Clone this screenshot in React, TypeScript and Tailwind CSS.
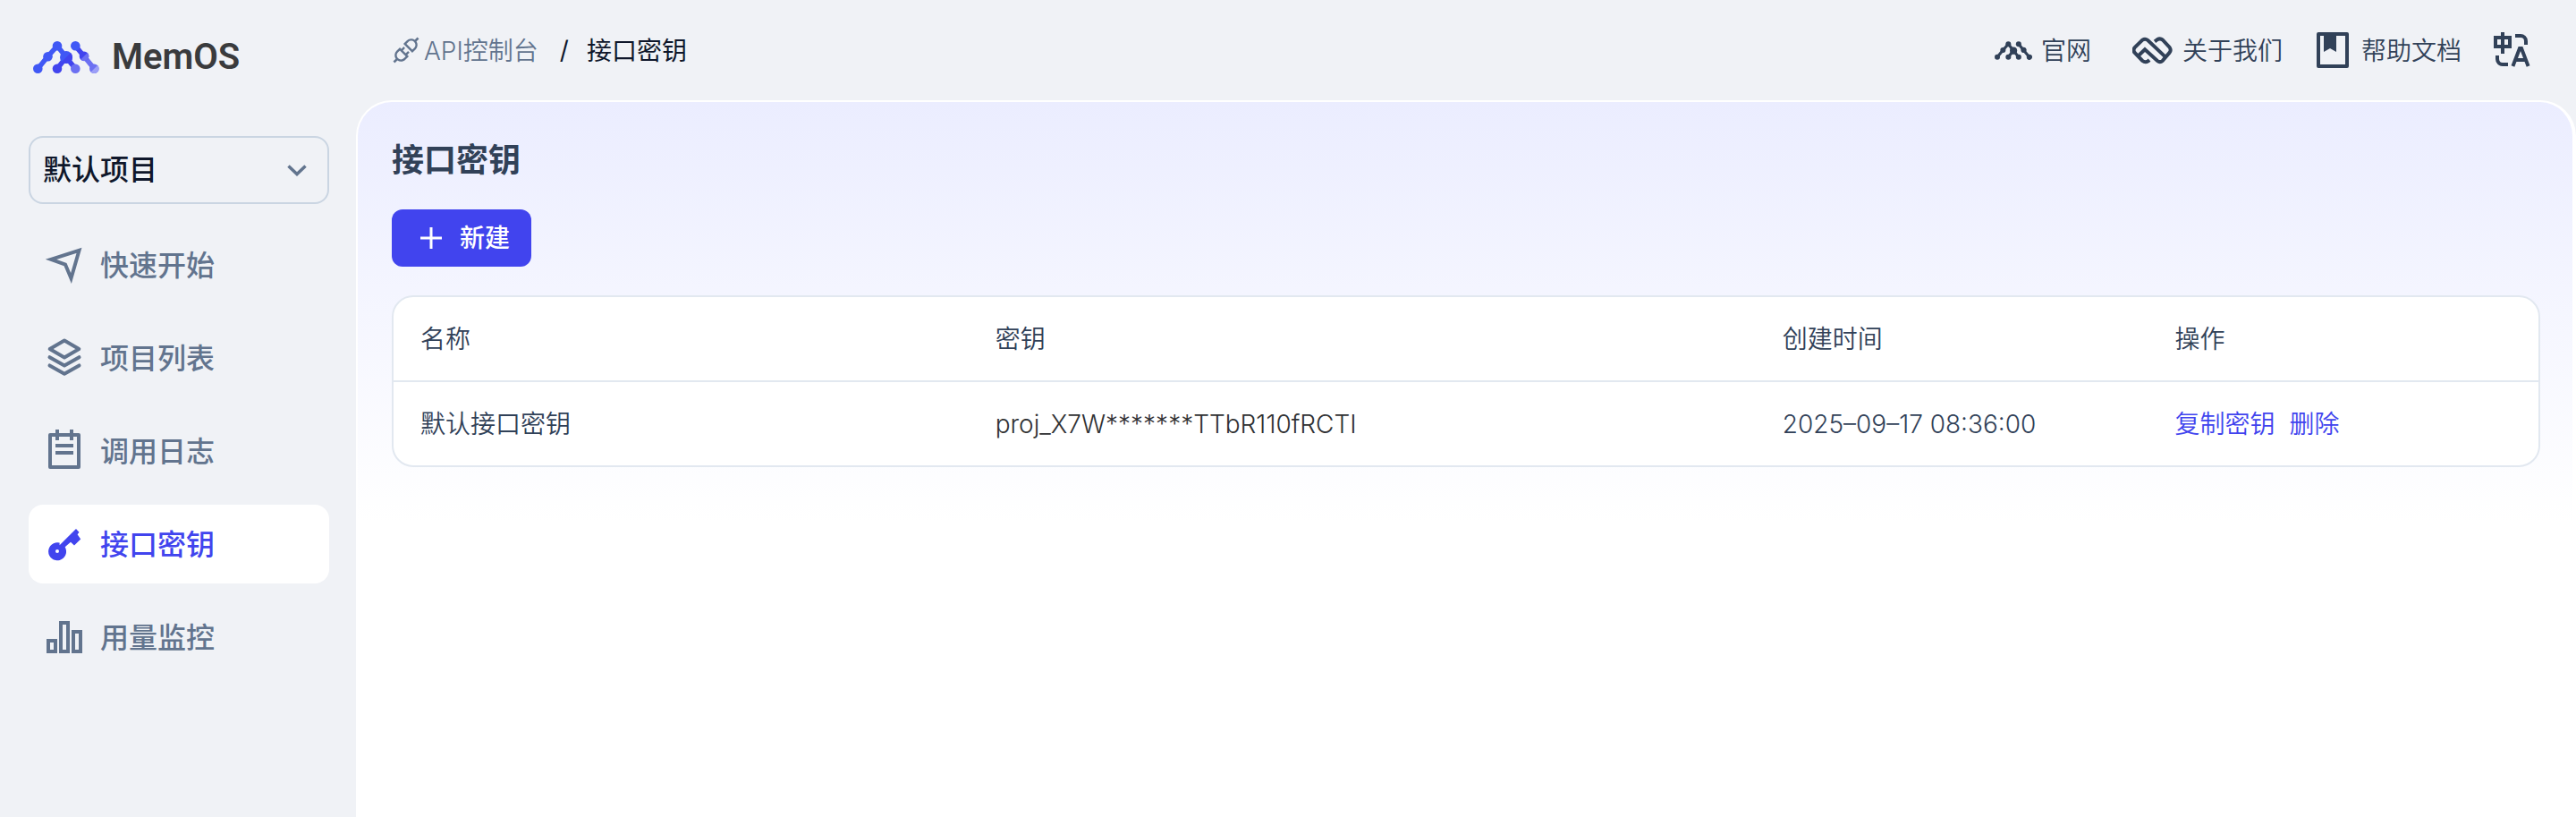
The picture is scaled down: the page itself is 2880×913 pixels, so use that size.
import type { ReactNode } from 'react';
import { AiOutlineApi } from 'react-icons/ai';

function MemLogo({ className, mono = false }: { className: string; mono?: boolean }) {
  const c = (hex: string) => (mono ? 'currentColor' : hex);
  const a = c('#4058f5');
  const b = c('#4144ee');
  const d = c('#6c70f2');
  const e = c('#9c9ff7');
  return (
    <svg viewBox="0 0 74 36" className={className} aria-hidden="true">
      <g strokeWidth="5.5" strokeLinecap="round">
        <path d="M5.3 30.7L16.5 17L27 5.3" stroke={a} fill="none" />
        <path d="M27 5.3L37 18" stroke={a} />
        <path d="M37 18L27 30.7" stroke={b} />
        <path d="M37 18L47.3 30.7" stroke={b} />
        <path d="M47.3 5.3L57 17" stroke={b} />
        <path d="M57 17L68.3 30.7" stroke={d} />
      </g>
      <circle cx="5.3" cy="30.7" r="5.3" fill={a} />
      <circle cx="16.5" cy="17.2" r="5.3" fill={a} />
      <circle cx="27" cy="5.3" r="5.3" fill={a} />
      <circle cx="37" cy="18" r="7" fill={a} />
      <path d="M42 13A7 7 0 0 1 32 23Z" fill={b} />
      <circle cx="27" cy="30.7" r="5.3" fill={b} />
      <circle cx="47.3" cy="5.3" r="5.3" fill={a} />
      <circle cx="47.3" cy="30.7" r="5.3" fill={d} />
      <circle cx="57" cy="16.8" r="5.3" fill={b} />
      <path d="M60.8 13A5.3 5.3 0 0 1 53.2 20.6Z" fill={d} />
      <circle cx="68.3" cy="30.7" r="5.3" fill={d} />
      <path d="M72.1 27A5.3 5.3 0 0 1 64.5 34.4Z" fill={e} />
    </svg>
  );
}

function Icon({ children }: { children: ReactNode }) {
  return (
    <svg viewBox="0 0 48 48" className="size-12 shrink-0" fill="none" stroke="currentColor" strokeWidth="4" aria-hidden="true">
      {children}
    </svg>
  );
}

const SendIcon = () => (
  <Icon>
    <path d="M9 17.8L40.5 7.8L31.5 39L25 23.5Z" strokeMiterlimit="10" />
  </Icon>
);

const LayersIcon = () => (
  <Icon>
    <g strokeLinejoin="round" strokeLinecap="round">
      <path d="M24 4.6L40.3 14L24 23.4L7.7 14Z" />
      <path d="M7.5 23.2L24 32.6L40.5 23.2" />
      <path d="M7.5 32.4L24 41.8L40.5 32.4" />
    </g>
  </Icon>
);

const LogIcon = () => (
  <Icon>
    <rect x="8" y="6" width="32" height="36" strokeLinejoin="round" />
    <path d="M16 0V12M32 0V12M14 18H34M14 26H34" />
  </Icon>
);

const KeyIcon = () => (
  <Icon>
    <path
      fill="currentColor"
      stroke="none"
      fillRule="evenodd"
      d="M18.6 25.2L37 7L40.5 10.8L38.6 13.2L42.2 18.6L35 25.6L31 21.8L24.7 27.2A10 10 0 1 1 18.6 22.6ZM16 30a2 2 0 1 0 0 4a2 2 0 1 0 0-4Z"
    />
  </Icon>
);

const UsageIcon = () => (
  <Icon>
    <path d="M6 28H14V40H6ZM20 8H28V40H20ZM34 18H42V40H34Z" />
  </Icon>
);

const BookIcon = () => (
  <Icon>
    <rect x="8" y="6" width="32" height="36" strokeLinejoin="round" />
    <path d="M14 4H28V26L21 22L14 26Z" fill="currentColor" stroke="none" />
  </Icon>
);

const TranslateIcon = () => (
  <Icon>
    <path d="M6 10H22V20H6ZM14 4V28M28 8H34A6 6 0 0 1 40 14V18M8 30V34A6 6 0 0 0 14 40H20" />
    <path d="M25.4 42L33 22H35L42.6 42M28 35H40" />
  </Icon>
);

const AboutIcon = () => (
  <svg viewBox="24 18 144 96" className="h-8 w-12 shrink-0" fill="none" stroke="currentColor" strokeWidth="12" aria-hidden="true">
    <path d="M99 37L107 31Q117 25 126 32L149 57Q155 66 149 74L126 101Q117 109 108 102L66 64L42 87" />
    <path d="M81 99L77 103Q67 109 58 102L32 75Q25 66 32 57L58 32Q67 26 76 33L134 88" />
  </svg>
);

const navItems = [
  { label: '快速开始', icon: <SendIcon />, active: false },
  { label: '项目列表', icon: <LayersIcon />, active: false },
  { label: '调用日志', icon: <LogIcon />, active: false },
  { label: '接口密钥', icon: <KeyIcon />, active: true },
  { label: '用量监控', icon: <UsageIcon />, active: false },
];

function Sidebar() {
  return (
    <aside className="flex w-[398px] shrink-0 flex-col px-8 pr-[30px]">
      <a href="#" className="flex items-center gap-[14px] pt-9 pl-[5px]">
        <MemLogo className="h-9 w-[74px]" />
        <span className="font-[Roboto,sans-serif] text-[40px] leading-14 font-semibold text-[#3a3b3d]">MemOS</span>
      </a>
      <div className="mt-[60px] grid items-center">
        <select
          aria-label="项目"
          className="col-start-1 row-start-1 h-[76px] w-full appearance-none rounded-2xl border-2 border-slate-300 bg-transparent px-4 pl-[14px] text-[32px] font-medium text-slate-900"
        >
          <option>默认项目</option>
        </select>
        <svg viewBox="0 0 24 24" className="pointer-events-none col-start-1 row-start-1 mr-6 size-6 justify-self-end text-slate-500" fill="none" stroke="currentColor" strokeWidth="3.5" aria-hidden="true">
          <path d="M2.5 7.5L12 16.5L21.5 7.5" />
        </svg>
      </div>
      <nav className="mt-6 flex flex-col gap-4">
        {navItems.map((item) => (
          <a
            key={item.label}
            href="#"
            className={
              item.active
                ? 'flex h-[88px] items-center gap-4 rounded-2xl bg-white px-4 text-[32px] font-medium text-[#4144ee]'
                : 'flex h-[88px] items-center gap-4 rounded-2xl px-4 text-[32px] font-medium text-slate-500'
            }
          >
            {item.icon}
            <span className="pt-0.5">{item.label}</span>
          </a>
        ))}
      </nav>
    </aside>
  );
}

function Header() {
  return (
    <header className="flex h-28 items-center justify-between pr-12 pl-[38px] text-[28px] font-[350]">
      <nav aria-label="面包屑" className="flex items-center">
        <a href="#" className="flex items-center gap-0.5 text-slate-500">
          <AiOutlineApi className="size-9" aria-hidden="true" />
          <span className="pt-0.5">API控制台</span>
        </a>
        <span className="pr-5 pl-6 font-normal text-slate-900">/</span>
        <span className="pt-0.5 font-normal text-slate-900">接口密钥</span>
      </nav>
      <div className="flex items-center gap-8 text-slate-700">
        <a href="#" className="flex items-center gap-[10px] pr-[14px]">
          <MemLogo mono className="h-[21px] w-[42px]" />
          <span className="pt-0.5">官网</span>
        </a>
        <a href="#" className="flex items-center gap-2">
          <AboutIcon />
          <span className="pt-0.5">关于我们</span>
        </a>
        <a href="#" className="flex items-center gap-2">
          <BookIcon />
          <span className="pt-0.5">帮助文档</span>
        </a>
        <button type="button" aria-label="切换语言">
          <TranslateIcon />
        </button>
      </div>
    </header>
  );
}

function KeyTable() {
  return (
    <div className="mt-8 overflow-hidden rounded-3xl border-2 border-slate-200 bg-white">
      <table className="w-full table-fixed text-left text-[28px] font-[350] text-slate-700">
        <colgroup>
          <col className="w-[26.8%]" />
          <col className="w-[36.7%]" />
          <col className="w-[18.3%]" />
          <col />
        </colgroup>
        <thead>
          <tr className="h-[94px] border-b-2 border-slate-200">
            <th className="px-[30px] font-[350]">名称</th>
            <th className="px-[30px] font-[350]">密钥</th>
            <th className="px-[30px] font-[350]">创建时间</th>
            <th className="px-[30px] font-[350]">操作</th>
          </tr>
        </thead>
        <tbody>
          <tr className="h-[94px]">
            <td className="px-[30px]">默认接口密钥</td>
            <td className="px-[30px] text-[#303133]">proj_X7W*******TTbR110fRCTI</td>
            <td className="px-[30px]">2025–09–17 08:36:00</td>
            <td className="px-[30px]">
              <div className="flex gap-4 text-[#4144ee]">
                <button type="button">复制密钥</button>
                <button type="button">删除</button>
              </div>
            </td>
          </tr>
        </tbody>
      </table>
    </div>
  );
}

export default function App() {
  return (
    <div className="flex min-h-screen bg-[#f0f2f6] font-[Inter,'Noto_Sans_CJK_SC',sans-serif]">
      <Sidebar />
      <div className="flex min-w-0 flex-1 flex-col">
        <Header />
        <main className="flex-1 rounded-t-[40px] border-t-2 border-r-4 border-l-2 border-white bg-white bg-[linear-gradient(to_bottom,#ebedff,#ffffff_470px)] px-[38px] pt-[38px] pr-9">
          <h1 className="text-[36px] leading-[54px] font-semibold text-slate-700">接口密钥</h1>
          <button type="button" className="mt-7 flex h-16 items-center gap-4 rounded-xl bg-[#4144ee] pr-6 pl-7 text-[28px] font-medium text-white">
            <svg viewBox="0 0 32 32" className="size-8" stroke="currentColor" strokeWidth="3" aria-hidden="true">
              <path d="M16 4V28M4 16H28" />
            </svg>
            新建
          </button>
          <KeyTable />
        </main>
      </div>
    </div>
  );
}
